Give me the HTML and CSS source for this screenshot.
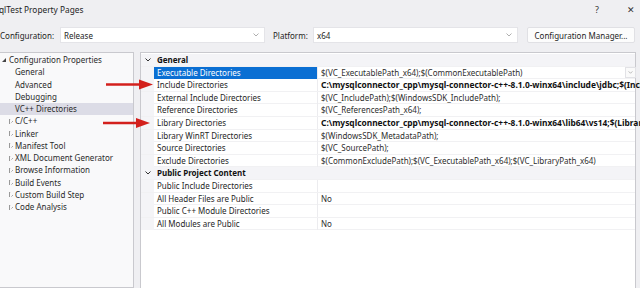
FILE: index.html
```html
<!DOCTYPE html>
<html lang="en">

<head>
    <meta charset="UTF-8">
    <meta name="viewport" content="width=device-width, initial-scale=1.0">
    <title>qlTest Property Pages</title>

    <link rel="stylesheet" href="styles.css">
</head>

<body>

    <div class="dialog">
        <div class="titlebar">
            <span class="title">qlTest Property Pages</span>
            <span class="help">?</span>
            <span class="close">&#x2715;</span>
        </div>

        <div class="toolbar">
            <span class="label label-config">Configuration:</span>
            <div class="combo">
                <span>Release</span>
                <svg class="chev" width="6" height="4" viewBox="0 0 6 4"><path d="M0.5 0.5 L3 3 L5.5 0.5" fill="none" stroke="#9a9a9a" stroke-width="0.8"/></svg>
            </div>
            <span class="label label-platform">Platform:</span>
            <div class="combo">
                <span>x64</span>
                <svg class="chev" width="6" height="4" viewBox="0 0 6 4"><path d="M0.5 0.5 L3 3 L5.5 0.5" fill="none" stroke="#9a9a9a" stroke-width="0.8"/></svg>
            </div>
            <button class="manager">Configuration Manager...</button>
        </div>

        <div class="main">
            <div class="tree">
                <div class="node root"><span class="tri-open"></span>Configuration Properties</div>
                <div class="node leaf">General</div>
                <div class="node leaf">Advanced</div>
                <div class="node leaf">Debugging</div>
                <div class="node leaf selected">VC++ Directories</div>
                <div class="node branch"><span class="tri-closed"></span>C/C++</div>
                <div class="node branch"><span class="tri-closed"></span>Linker</div>
                <div class="node branch"><span class="tri-closed"></span>Manifest Tool</div>
                <div class="node branch"><span class="tri-closed"></span>XML Document Generator</div>
                <div class="node branch"><span class="tri-closed"></span>Browse Information</div>
                <div class="node branch"><span class="tri-closed"></span>Build Events</div>
                <div class="node branch"><span class="tri-closed"></span>Custom Build Step</div>
                <div class="node branch"><span class="tri-closed"></span>Code Analysis</div>
            </div>

            <div class="grid">
                <div class="row category">
                    <span class="gutter"><svg width="6" height="4" viewBox="0 0 6 4"><path d="M0.5 0.5 L3 3 L5.5 0.5" fill="none" stroke="#333" stroke-width="1"/></svg></span>
                    <span class="cat-name">General</span>
                </div>
                <div class="row">
                    <span class="gutter"></span>
                    <span class="name active">Executable Directories</span>
                    <span class="value">
                        <span class="text">$(VC_ExecutablePath_x64);$(CommonExecutablePath)</span>
                        <span class="drop"><svg width="5" height="3" viewBox="0 0 6 4"><path d="M0.5 0.5 L3 3 L5.5 0.5" fill="none" stroke="#999" stroke-width="0.9"/></svg></span>
                    </span>
                </div>
                <div class="row">
                    <span class="gutter"></span>
                    <span class="name">Include Directories</span>
                    <span class="value bold"><span class="text">C:\mysqlconnector_cpp\mysql-connector-c++-8.1.0-winx64\include\jdbc;$(IncludePath)</span></span>
                </div>
                <div class="row">
                    <span class="gutter"></span>
                    <span class="name">External Include Directories</span>
                    <span class="value"><span class="text">$(VC_IncludePath);$(WindowsSDK_IncludePath);</span></span>
                </div>
                <div class="row">
                    <span class="gutter"></span>
                    <span class="name">Reference Directories</span>
                    <span class="value"><span class="text">$(VC_ReferencesPath_x64);</span></span>
                </div>
                <div class="row">
                    <span class="gutter"></span>
                    <span class="name">Library Directories</span>
                    <span class="value bold"><span class="text">C:\mysqlconnector_cpp\mysql-connector-c++-8.1.0-winx64\lib64\vs14;$(LibraryPath)</span></span>
                </div>
                <div class="row">
                    <span class="gutter"></span>
                    <span class="name">Library WinRT Directories</span>
                    <span class="value"><span class="text">$(WindowsSDK_MetadataPath);</span></span>
                </div>
                <div class="row">
                    <span class="gutter"></span>
                    <span class="name">Source Directories</span>
                    <span class="value"><span class="text">$(VC_SourcePath);</span></span>
                </div>
                <div class="row">
                    <span class="gutter"></span>
                    <span class="name">Exclude Directories</span>
                    <span class="value"><span class="text">$(CommonExcludePath);$(VC_ExecutablePath_x64);$(VC_LibraryPath_x64)</span></span>
                </div>
                <div class="row category">
                    <span class="gutter"><svg width="6" height="4" viewBox="0 0 6 4"><path d="M0.5 0.5 L3 3 L5.5 0.5" fill="none" stroke="#333" stroke-width="1"/></svg></span>
                    <span class="cat-name">Public Project Content</span>
                </div>
                <div class="row">
                    <span class="gutter"></span>
                    <span class="name">Public Include Directories</span>
                    <span class="value"><span class="text"></span></span>
                </div>
                <div class="row">
                    <span class="gutter"></span>
                    <span class="name">All Header Files are Public</span>
                    <span class="value"><span class="text">No</span></span>
                </div>
                <div class="row">
                    <span class="gutter"></span>
                    <span class="name">Public C++ Module Directories</span>
                    <span class="value"><span class="text"></span></span>
                </div>
                <div class="row">
                    <span class="gutter"></span>
                    <span class="name">All Modules are Public</span>
                    <span class="value"><span class="text">No</span></span>
                </div>
            </div>
        </div>

        <!-- annotation arrows drawn over the screenshot -->
        <svg class="arrows" width="640" height="288" viewBox="0 0 640 288">
            <g fill="#d3201c" stroke="#d3201c">
                <line x1="106" y1="84.5" x2="142" y2="84.5" stroke-width="2.6"/>
                <polygon points="139,79.5 153,84.5 139,89.5" stroke="none"/>
                <line x1="103" y1="123" x2="139" y2="123" stroke-width="2.6"/>
                <polygon points="136,118 150,123 136,128" stroke="none"/>
            </g>
        </svg>
    </div>

</body>

</html>
```

FILE: styles.css
```css
* {
    box-sizing: border-box;
}

body {
    margin: 0;
    width: 640px;
    height: 288px;
    overflow: hidden;
    background-color: #efeff2;
    font-family: "Noto Sans", sans-serif;
    font-size: 8px;
    color: #1e1e1e;
}

.dialog {
    position: relative;
    height: 288px;
}

.titlebar {
    display: flex;
    align-items: center;
    height: 18px;
}

.title {
    flex: 1;
    margin-left: -1px;
    font-size: 8.3px;
}

.help {
    width: 14px;
    text-align: center;
    font-size: 9px;
    color: #333;
}

.close {
    width: 14px;
    margin-left: 20px;
    margin-right: 2px;
    text-align: center;
    font-size: 9px;
    color: #333;
}

.toolbar {
    display: flex;
    align-items: center;
    height: 16px;
    margin-top: 9px;
}

.label-config {
    width: 60px;
}

.label-platform {
    width: 40px;
    margin-left: 8px;
}

.combo {
    display: flex;
    align-items: center;
    justify-content: space-between;
    width: 205px;
    height: 16px;
    padding: 0 5px 0 3px;
    background-color: #fff;
    border: 1px solid #e4e4e8;
}

.manager {
    width: 108px;
    height: 16px;
    margin-left: 9px;
    padding: 0;
    font-family: inherit;
    font-size: 8px;
    color: #1e1e1e;
    background-color: #fcfcfc;
    border: 1px solid #e0e0e4;
    border-radius: 2px;
}

.main {
    display: flex;
    gap: 6px;
    height: 236px;
    margin-top: 9px;
}

/* left tree */

.tree {
    width: 134px;
    padding-top: 1px;
    background-color: #f9f9fa;
    border: 1px solid #c9c9ce;
    border-left: none;
}

.node {
    position: relative;
    height: 12.25px;
    line-height: 12.25px;
    white-space: nowrap;
    color: #2a2a2a;
}

.root {
    padding-left: 9px;
}

.leaf,
.branch {
    padding-left: 15px;
}

.selected {
    background-color: #dcdce6;
}

.tri-open {
    position: absolute;
    left: 2px;
    top: 4px;
    width: 0;
    height: 0;
    border-left: 4px solid transparent;
    border-bottom: 4px solid #444;
}

.tri-closed {
    position: absolute;
    left: 9px;
    top: 3.5px;
    width: 4px;
    height: 5px;
    background: linear-gradient(to top right, transparent 48%, #999 50%, transparent 60%) top / 100% 50% no-repeat,
        linear-gradient(to bottom right, transparent 48%, #999 50%, transparent 60%) bottom / 100% 50% no-repeat;
    border-left: 1px solid #999;
}

/* right property grid */

.grid {
    width: 496px;
    padding-top: 1px;
    background-color: #fff;
    border: 1px solid #c9c9ce;
    border-bottom: none;
}

.row {
    display: grid;
    grid-template-columns: 13px 163px 324px;
    height: 12.6px;
    line-height: 12px;
    border-bottom: 0.6px solid #f1f1f3;
    white-space: nowrap;
}

.gutter {
    display: flex;
    align-items: center;
    justify-content: center;
    background-color: #f4f4f7;
}

.name {
    padding-left: 3px;
    color: #262626;
}

.name.active {
    background-color: #0b6fd3;
    color: #fff;
}

.value {
    display: flex;
    align-items: center;
    padding-left: 3px;
    border-left: 1px solid #ececef;
    color: #2e2e2e;
    overflow: hidden;
}

.value .text {
    flex: 1;
    overflow: hidden;
}

.bold {
    font-size: 8.4px;
    font-weight: 700;
    color: #111;
}

.drop {
    display: flex;
    align-items: center;
    justify-content: center;
    width: 11px;
    height: 11px;
    margin-right: 5px;
    border: 1px solid #e2e2e6;
    background-color: #fafafa;
}

.category {
    background-color: #f4f4f7;
}

.cat-name {
    grid-column: 2 / span 2;
    padding-left: 3px;
    font-weight: 700;
    color: #111;
}

.arrows {
    position: absolute;
    left: 0;
    top: 0;
    pointer-events: none;
}
```
